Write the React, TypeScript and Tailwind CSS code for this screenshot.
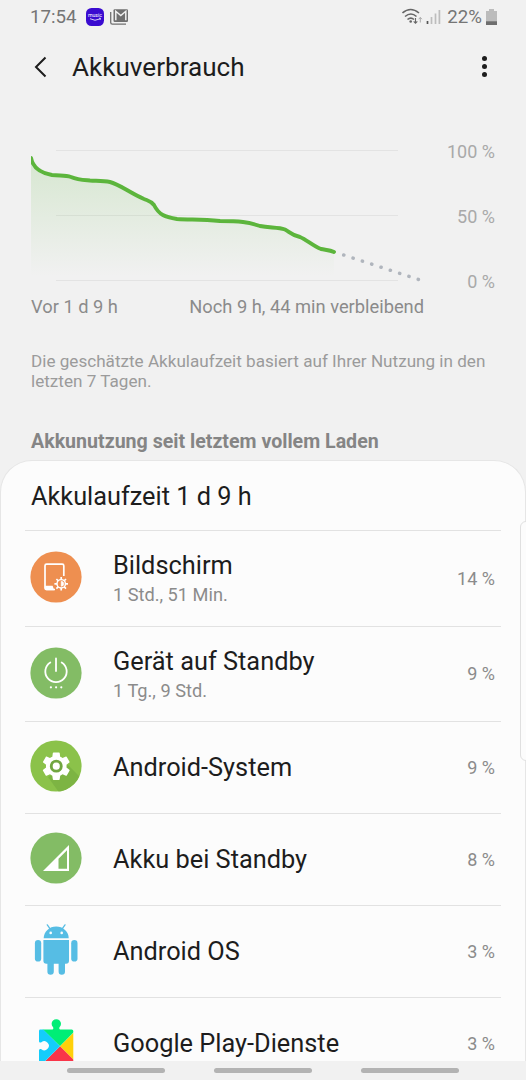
import type { ReactNode } from "react";

type Usage = {
    id: number;
    name: string;
    detail?: string;
    percent: string;
    height: string;
    icon: ReactNode;
};

const ScreenIcon = () => (
    <svg width="52" height="52" viewBox="0 0 52 52">
        <circle cx="26" cy="26" r="25.6" fill="#ee8f50" />
        <path d="M25 38.500h-8.400a1.600 1.600 0 0 1-1.600-1.600V14.800a1.600 1.600 0 0 1 1.600-1.600h15.600a1.600 1.600 0 0 1 1.600 1.600V25" fill="none" stroke="#fff" strokeWidth="1.700" />
        <path d="M15 34.700h7.600l1.700 4.600h-8a1.500 1.500 0 0 1-1.500-1.500z" fill="#fff" />
        <path d="M31.200 26v13.600M24.400 32.800H38M26.400 28l9.600 9.600M36 28l-9.600 9.600" stroke="#fff" strokeWidth="1.700" />
        <circle cx="31.200" cy="32.800" r="4.200" fill="#ee8f50" stroke="#fff" strokeWidth="1.400" />
        <path d="M31.200 30.300a2.500 2.500 0 0 1 0 5z" fill="#fff" stroke="#fff" strokeWidth=".6" />
    </svg>
);

const PowerIcon = () => (
    <svg width="52" height="52" viewBox="0 0 52 52">
        <circle cx="26" cy="26" r="25.600" fill="#83bc65" />
        <path d="M20.300 15.400a10.700 10.700 0 1 0 11.400 0M26 11.500v12.500" fill="none" stroke="#fff" strokeWidth="1.800" strokeLinecap="round" />
        <circle cx="20.900" cy="40.300" r="1.100" fill="#fff" />
        <circle cx="26.100" cy="40.300" r="1.100" fill="#fff" />
        <circle cx="31.300" cy="40.300" r="1.100" fill="#fff" />
    </svg>
);

const SystemIcon = () => (
    <svg width="52" height="52" viewBox="0 0 52 52">
        <defs>
            <clipPath id="system-clip">
                <circle cx="26" cy="26" r="25.600" />
            </clipPath>
        </defs>
        <circle cx="26" cy="26" r="25.600" fill="#8bc24a" />
        <path d="M38 25l20 20-20 20-20-28z" fill="#7db443" clipPath="url(#system-clip)" />
        <g transform="translate(9.100 9) scale(1.430)">
            <path
                fill="#fff"
                d="M19.140 12.940c.04-.3.060-.610.060-.940 0-.320-.020-.640-.070-.940l2.030-1.580a.49.49 0 0 0 .12-.610l-1.920-3.320a.488.488 0 0 0-.590-.220l-2.390.960c-.5-.380-1.030-.7-1.620-.940l-.360-2.540a.484.484 0 0 0-.480-.410h-3.840c-.240 0-.430.170-.470.410l-.360 2.540c-.590.240-1.130.570-1.620.940l-2.390-.960c-.220-.080-.470 0-.590.220L2.740 8.870c-.12.210-.08.470.12.610l2.030 1.580c-.05.3-.09.630-.09.940s.02.640.07.940l-2.030 1.580a.49.49 0 0 0-.12.610l1.920 3.320c.12.220.37.290.59.220l2.390-.960c.5.380 1.030.7 1.620.940l.360 2.540c.05.240.24.410.48.410h3.840c.24 0 .44-.17.47-.41l.36-2.540c.59-.24 1.130-.56 1.620-.94l2.390.96c.22.08.47 0 .59-.22l1.920-3.320c.12-.22.07-.47-.12-.61l-2.010-1.580z"
            />
            <circle cx="12" cy="12" r="3.500" fill="#fff" stroke="#71a640" strokeWidth="2" />
        </g>
    </svg>
);

const SignalIcon = () => (
    <svg width="52" height="52" viewBox="0 0 52 52">
        <circle cx="26" cy="26" r="25.600" fill="#83bc65" />
        <path fill="#fff" fillRule="evenodd" d="M39 13v26H13zM37 18.300L28.500 26.800V36.700H37z" />
    </svg>
);

const AndroidIcon = () => (
    <svg width="52" height="52" viewBox="0 0 52 52" fill="#56bde4">
        <path d="M13.700 14.200a12.500 11.700 0 0 1 25 0z" />
        <path d="M17.300.900l3 4.200M35 .900l-3 4.200" stroke="#56bde4" strokeWidth="1.300" strokeLinecap="round" />
        <rect x="4.900" y="16" width="6.300" height="21.600" rx="3.150" />
        <rect x="41.200" y="16" width="6.300" height="21.600" rx="3.150" />
        <path d="M13.400 16h25.600v20.800a3 3 0 0 1-3 3H35v7.800a3.200 3.200 0 0 1-6.400 0v-7.800h-4.800v7.800a3.200 3.200 0 0 1-6.400 0v-7.800h-1a3 3 0 0 1-3-3z" />
        <circle cx="20.700" cy="8.900" r="1.300" fill="#fcfcfc" />
        <circle cx="31.700" cy="8.900" r="1.300" fill="#fcfcfc" />
    </svg>
);

const PlayServicesIcon = () => (
    <svg width="52" height="52" viewBox="0 0 52 52">
        <defs>
            <clipPath id="puzzle-clip">
                <path d="M10.400 13.500h11.400c1.400 0 2-1.200 1.100-2.400a4.700 4.700 0 1 1 6.800 0c-.900 1.200-.300 2.400 1.100 2.400h10.900a1.600 1.600 0 0 1 1.600 1.600V48H9V34.500c0-1.400 1.200-2 2.400-1.300a4.500 4.500 0 1 0 0-6.900C10.200 27 9 26.400 9 25V14.900A1.400 1.400 0 0 1 10.400 13.500z" />
            </clipPath>
        </defs>
        <g clipPath="url(#puzzle-clip)">
            <path d="M0 1h59L30 30.200z" fill="#00ee76" />
            <path d="M50 10.200L30 30.200l20 20z" fill="#ffd00a" />
            <path d="M30 30.200l20 20H10z" fill="#f93549" />
            <path d="M0 .200l30 30-20 20H0z" fill="#14cdfb" />
        </g>
    </svg>
);

const usages: Usage[] = [
    { id: 1, name: "Bildschirm", detail: "1 Std., 51 Min.", percent: "14 %", height: "h-[96px]", icon: <ScreenIcon /> },
    { id: 2, name: "Gerät auf Standby", detail: "1 Tg., 9 Std.", percent: "9 %", height: "h-[95px]", icon: <PowerIcon /> },
    { id: 3, name: "Android-System", percent: "9 %", height: "h-[92px]", icon: <SystemIcon /> },
    { id: 4, name: "Akku bei Standby", percent: "8 %", height: "h-[92px]", icon: <SignalIcon /> },
    { id: 5, name: "Android OS", percent: "3 %", height: "h-[92px]", icon: <AndroidIcon /> },
    { id: 6, name: "Google Play-Dienste", percent: "3 %", height: "h-[92px]", icon: <PlayServicesIcon /> },
];

function StatusBar() {
    return (
        <div className="flex h-[34px] shrink-0 items-center pl-[30px] pr-[29px] text-[18.700px] text-[#757575]">
            <span>17:54</span>
            <svg className="ml-[9px]" width="18" height="18" viewBox="0 0 18 18">
                <rect width="18" height="18" rx="5.500" fill="#3a0bd0" />
                <text x="9" y="9.200" textAnchor="middle" fontSize="5.200" fill="#fff">music</text>
                <path d="M4 10.700q5 3 10 .2M13 10.200l1.500.1-.3 1.500" fill="none" stroke="#fff" strokeWidth=".8" />
            </svg>
            <svg className="ml-[6px]" width="18" height="16" viewBox="0 0 18 16">
                <path d="M.7 3v10.500a1.700 1.700 0 0 0 1.700 1.700H16" fill="none" stroke="#707070" strokeWidth="1.300" />
                <rect x="3.500" y=".3" width="14.500" height="12.700" rx="1.200" fill="#707070" />
                <path d="M5.800 11.300V2.300l5 4.200 5-4.200v9" fill="none" stroke="#f1f1f1" strokeWidth="1.500" />
            </svg>
            <div className="grow" />
            <svg width="40" height="18" viewBox="402 7 40 18">
                <g fill="none" stroke="#666" strokeWidth="1.600">
                    <path d="M402.500 12q8-7 16.500 0" />
                    <path d="M405 15.500q6-5 11.500 0" />
                    <path d="M407.500 18.500q3.300-2.800 6.500 0" />
                </g>
                <circle cx="410.700" cy="20.500" r="1.300" fill="#666" />
                <path d="M415.500 17v5M413.700 20.300l1.800 2 1.800-2" fill="none" stroke="#666" strokeWidth="1.100" />
                <path d="M420.300 21.500v-5M418.700 18.200l1.600-1.800 1.600 1.800" fill="none" stroke="#aaa" strokeWidth="1" />
                <path d="M427.500 20v3" stroke="#555" strokeWidth="1.700" />
                <path d="M431.500 16v7M435.500 12.500v10.500M439.400 9v14" stroke="#bdbdbd" strokeWidth="1.700" />
            </svg>
            <span className="ml-[5px]">22%</span>
            <svg className="ml-[4px]" width="11" height="16" viewBox="0 0 11 16">
                <path d="M0 2h3V0h5v2h3v14H0z" fill="#bcbcbc" />
                <path d="M0 12.300h11V16H0z" fill="#6e6e6e" />
            </svg>
        </div>
    );
}

function BatteryChart() {
    return (
        <div className="flex h-[190px] shrink-0 justify-between pr-[31px]">
            <svg width="430" height="190" viewBox="0 100 430 190">
                <defs>
                    <linearGradient id="area" x1="0" y1="158" x2="0" y2="276" gradientUnits="userSpaceOnUse">
                        <stop offset="0" stopColor="#5db83b" stopOpacity=".18" />
                        <stop offset="1" stopColor="#5db83b" stopOpacity="0" />
                    </linearGradient>
                    <clipPath id="chart-clip">
                        <path d="M31 100h400v190H31z" />
                    </clipPath>
                </defs>
                <path d="M56 150.500h342M56 215.500h342M56 280.500h342" stroke="#e3e3e3" />
                <path
                    d="M31 158C33 168 40 173 52 175C60 176 65 175 71 177C78 180 84 180 90 180.500C99 181 104 181 110 182C119 184 130 193 144 199C149 201 151 201 154 205C159 215 165 217 177 219C190 220 200 219 220 221C240 221 248 222 260 226C270 228 278 227 285 229.500C290 232 291 235 300 237C307 240 313 246 321 249C326 250 330 250 334 252V276H31Z"
                    fill="url(#area)"
                />
                <path
                    d="M31 158C33 168 40 173 52 175C60 176 65 175 71 177C78 180 84 180 90 180.500C99 181 104 181 110 182C119 184 130 193 144 199C149 201 151 201 154 205C159 215 165 217 177 219C190 220 200 219 220 221C240 221 248 222 260 226C270 228 278 227 285 229.500C290 232 291 235 300 237C307 240 313 246 321 249C326 250 330 250 334 252"
                    fill="none"
                    stroke="#5cb53c"
                    strokeWidth="3.900"
                    strokeLinecap="round"
                    clipPath="url(#chart-clip)"
                />
                <path d="M343.700 255L418.500 279.500" stroke="#b0b5bd" strokeWidth="3.500" strokeLinecap="round" strokeDasharray=".2 9.600" />
            </svg>
            <div className="flex flex-col gap-[41px] pt-[40px] text-right text-[18px] leading-[24px] text-[#a9a9a9]">
                <span>100 %</span>
                <span>50 %</span>
                <span>0 %</span>
            </div>
        </div>
    );
}

export default function App() {
    return (
        <div className="relative flex h-[1080px] w-[526px] flex-col overflow-hidden bg-[#f1f1f1] font-['Roboto',sans-serif]">
            <StatusBar />

            {/* Header */}
            <div className="flex h-[66px] shrink-0 items-center pl-[33px] pr-[39px]">
                <svg width="15" height="22" viewBox="0 0 15 22">
                    <path d="M12.500 1.500L3 11l9.500 9.500" fill="none" stroke="#1d1d1d" strokeWidth="2" />
                </svg>
                <h1 className="ml-[24px] grow pt-px text-[26.100px] text-[#1d1d1d]">Akkuverbrauch</h1>
                <div className="mb-[2px] flex flex-col gap-[3px]">
                    <div className="size-[5px] rounded-full bg-[#1d1d1d]" />
                    <div className="size-[5px] rounded-full bg-[#1d1d1d]" />
                    <div className="size-[5px] rounded-full bg-[#1d1d1d]" />
                </div>
            </div>

            <BatteryChart />

            <div className="flex h-[34px] shrink-0 items-center justify-between pl-[31px] pr-[102px] text-[18.300px] text-[#8b8b8b]">
                <span>Vor 1 d 9 h</span>
                <span>Noch 9 h, 44 min verbleibend</span>
            </div>

            <p className="mt-[27px] shrink-0 pl-[31px] pr-[30px] text-[17.130px] leading-[20px] text-[#9b9b9b]">
                Die geschätzte Akkulaufzeit basiert auf Ihrer Nutzung in den letzten 7 Tagen.
            </p>
            <h2 className="mt-[39px] h-[30px] shrink-0 pl-[31px] text-[19.600px] font-bold leading-[24px] text-[#858585]">
                Akkunutzung seit letztem vollem Laden
            </h2>

            {/* Usage list */}
            <div className="h-[601px] shrink-0 overflow-hidden rounded-t-[32px] border-x border-t border-[#e6e6e6] bg-[#fcfcfc]">
                <div className="flex h-[69px] items-center pl-[30px] pt-[2px] text-[25.300px] text-[#1d1d1d]">Akkulaufzeit 1 d 9 h</div>
                {usages.map((usage) => (
                    <div key={usage.id} className={`mx-[24px] flex items-center border-t border-[#e2e2e2] pl-[5px] pr-[6px] ${usage.height}`}>
                        <div className="mb-[3px]">{usage.icon}</div>
                        <div className={usage.detail ? "ml-[31px] grow" : "mb-[2px] ml-[31px] grow"}>
                            <div className="text-[25.350px] leading-[32px] text-[#1d1d1d]">{usage.name}</div>
                            {usage.detail && <div className="pt-px text-[18.200px] leading-[26px] text-[#8b8b8b]">{usage.detail}</div>}
                        </div>
                        <span className="mb-[1px] text-[18px] text-[#8b8b8b]">{usage.percent}</span>
                    </div>
                ))}
            </div>

            {/* Edge panel handle */}
            <div className="absolute left-[520px] top-[521px] h-[240px] w-[12px] rounded-[6px] border border-[#e0e0e0] bg-[#fcfcfc]" />

            {/* Navigation hints */}
            <div className="flex h-[19px] shrink-0 items-center justify-center gap-[49px]">
                <div className="h-[5px] w-[98px] rounded-full bg-[#b3b3b3]" />
                <div className="h-[5px] w-[98px] rounded-full bg-[#b3b3b3]" />
                <div className="h-[5px] w-[98px] rounded-full bg-[#b3b3b3]" />
            </div>
        </div>
    );
}
